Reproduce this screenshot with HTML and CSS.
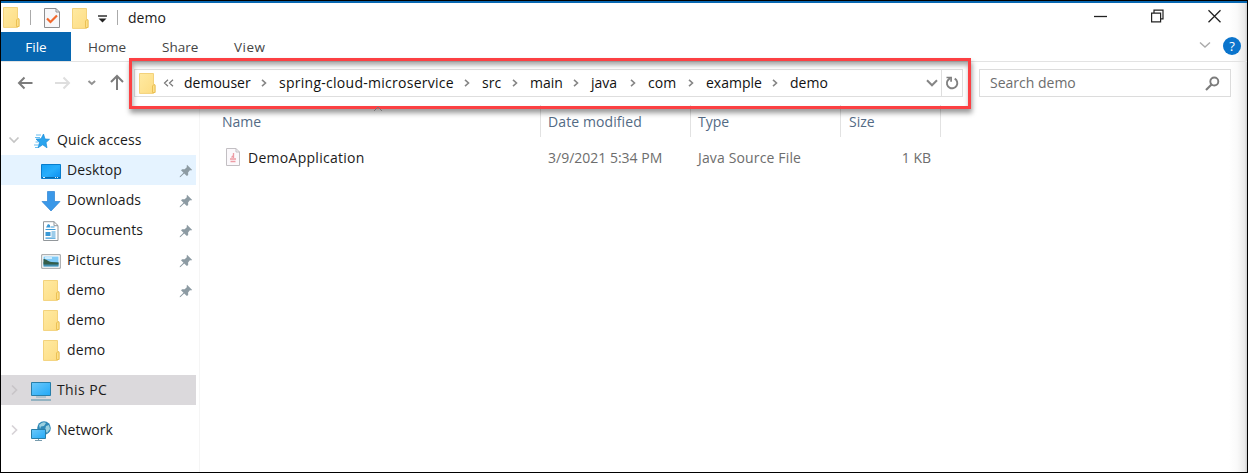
FILE: index.html
```html
<!DOCTYPE html>
<html lang="en">
<head>
<meta charset="utf-8">
<title>demo</title>
<link rel="stylesheet" href="styles.css">
</head>
<body>
<svg class="defs" width="0" height="0">
  <defs>
    <linearGradient id="fg" x1="0" y1="0" x2="1" y2="1"><stop offset="0" stop-color="#ffeaa2"/><stop offset="1" stop-color="#fddc82"/></linearGradient>
    <linearGradient id="bg" x1="0" y1="0" x2="1" y2="1"><stop offset="0" stop-color="#14a0f5"/><stop offset=".5" stop-color="#27aefc"/><stop offset="1" stop-color="#0a8df0"/></linearGradient>
    <linearGradient id="pc" x1="0" y1="0" x2="1" y2="1"><stop offset="0" stop-color="#6cc9fb"/><stop offset="1" stop-color="#22a9f7"/></linearGradient>
    <symbol id="folder" viewBox="0 0 17 21"><path d="M.5.5h14v10.800l1.500 1v7.200h-1.500v.900H.5z" fill="url(#fg)" stroke="#f3d27c"/><path d="M13.500 19.500v-6.500l1-1.200h1.500v7.700z" fill="#fde08a" stroke="#e9bd4e" stroke-width=".9"/></symbol>
    <symbol id="pin" viewBox="0 0 14 14"><path d="M8 .8 13.200 6l-1.500.4-.6-.3-2 2.300.1 2.500-1.300 1.200-2.700-2.700L1.500 13 .7 13.200.9 12.300 4.500 8.700 2 6.200 3.200 5.200l2.500.1L8 3.100l-.4-.9z" fill="#8d9ba3"/></symbol>
    <symbol id="chev" viewBox="0 0 6 8"><path d="M1 .8 4.500 4 1 7.200" fill="none" stroke="#858585" stroke-width="1.600"/></symbol>
  </defs>
</svg>
<div class="window">
  <header class="titlebar">
    <svg class="folder t1"><use href="#folder"/></svg>
    <i class="sep s1"></i>
    <svg class="check" viewBox="0 0 16 20"><path d="M.5.5h11.500l3.500 3.500v15.500H.5z" fill="#f7f7f9" stroke="#8e8e90"/><path d="M12 .5V4h3.500" fill="none" stroke="#8e8e90"/><path d="m3 10.500 3.500 3.500L13 7.500" fill="none" stroke="#f2692d" stroke-width="2.200"/></svg>
    <svg class="folder t2"><use href="#folder"/></svg>
    <svg class="more" viewBox="0 0 9 8"><path d="M0 1h9" stroke="#222" stroke-width="1.400"/><path d="M.5 3.500h8L4.500 7.500z" fill="#222"/></svg>
    <i class="sep s2"></i>
    <span class="title">demo</span>
    <div class="controls">
      <svg width="13" height="14" viewBox="0 0 13 14"><path d="M0 7.500h13" stroke="#222" stroke-width="1.300"/></svg>
      <svg width="13" height="14" viewBox="0 0 13 14"><path d="M.6 4.100h9v8.800h-9zM3 4V1.100h9v8.800H9.700" fill="none" stroke="#222" stroke-width="1.200"/></svg>
      <svg width="13" height="14" viewBox="0 0 13 14"><path d="m.5 1.200 12 12m0-12-12 12" stroke="#222" stroke-width="1.300"/></svg>
    </div>
  </header>
  <nav class="ribbon">
    <span class="tab file">File</span><span class="tab home">Home</span><span class="tab share">Share</span><span class="tab view">View</span>
    <svg class="collapse" viewBox="0 0 12 8"><path d="m1 1.500 5 4.500 5-4.500" fill="none" stroke="#aaa" stroke-width="1.400"/></svg>
    <span class="help">?</span>
  </nav>
  <div class="navbar">
    <svg class="arrows" viewBox="0 0 112 20"><g fill="none" stroke-width="2"><path d="M15.500 10H2M7.500 4.500 2 10l5.500 5.500" stroke="#7c7c7c"/><path d="M38 10h14M46.500 4.500 52 10l-5.500 5.500" stroke="#dedede"/><path d="m71.500 8 3.300 3 3.300-3" stroke="#929292"/><path d="M100 17V3.500M94 9l6-6 6 6" stroke="#7c7c7c"/></g></svg>
    <div class="address">
      <svg class="folder"><use href="#folder"/></svg>
      <svg class="back" viewBox="0 0 11 8"><path d="M5 .8 1.500 4 5 7.200M10 .8 6.500 4 10 7.200" fill="none" stroke="#777" stroke-width="1.200"/></svg>
      <div class="crumbs">
        <div class="crumb c1"><span>demouser</span><svg><use href="#chev"/></svg></div>
        <div class="crumb c2"><span>spring-cloud-microservice</span><svg><use href="#chev"/></svg></div>
        <div class="crumb c3"><span>src</span><svg><use href="#chev"/></svg></div>
        <div class="crumb c4"><span>main</span><svg><use href="#chev"/></svg></div>
        <div class="crumb c5"><span>java</span><svg><use href="#chev"/></svg></div>
        <div class="crumb c6"><span>com</span><svg><use href="#chev"/></svg></div>
        <div class="crumb c7"><span>example</span><svg><use href="#chev"/></svg></div>
        <div class="crumb c8"><span>demo</span></div>
      </div>
      <svg class="drop" viewBox="0 0 12 8"><path d="m1 1.300 5 5 5-5" fill="none" stroke="#858585" stroke-width="2"/></svg>
      <div class="refresh"><svg width="14" height="14" viewBox="0 0 14 14"><path d="M9.700 2.600A5.200 5.200 0 1 1 2.600 4.500L5 2" fill="none" stroke="#808080" stroke-width="1.900"/><path d="M1.500 1.500h4.600v4.300" fill="none" stroke="#808080" stroke-width="1.700"/></svg></div>
    </div>
    <div class="search"><span>Search demo</span><svg width="15" height="15" viewBox="0 0 15 15"><circle cx="9.300" cy="5.500" r="4" fill="none" stroke="#7c7c7c" stroke-width="1.900"/><path d="m6.500 8.500-5.500 5.500" stroke="#7c7c7c" stroke-width="2.200"/></svg></div>
    <div class="highlight"></div>
  </div>
  <div class="body">
    <aside class="sidebar">
      <div class="item root quick"><svg class="exp" viewBox="0 0 12 12"><path d="m1.500 3.500 4.500 4.500 4.500-4.500" fill="none" stroke="#c5c5c5" stroke-width="1.700"/></svg>
        <svg class="ico" viewBox="0 0 20 20"><path d="m12.500 3 1.500 5 4.500.3-3.500 3.200 1 5.300-4.300-3-4.700 3 1.500-5.300-3.500-3.400 5-.3z" fill="#2aa4ee" stroke="#188bd8" stroke-width=".7"/><path d="M5 4h5M4 6.500h5M4.500 11h3M3 14h5M4 16.500h3" stroke="#66bdf0"/></svg><span>Quick access</span></div>
      <div class="item child hover"><svg class="ico" viewBox="0 0 20 20"><path d="M.5 3.500h19v14H.5z" fill="url(#bg)" stroke="#087dcc"/><path d="M1 16.500h18" stroke="#096bad"/><path d="M2 16.500h2m10 0h1m1 0h1" stroke="#d3edff"/></svg><span class="l1">Desktop</span><svg class="pin"><use href="#pin"/></svg></div>
      <div class="item child"><svg class="ico" viewBox="0 0 20 20"><path d="M6.500.5h7v10H19L10 20 1 10.500h5.500z" fill="#3a98e8" stroke="#2b83d2" stroke-width=".7"/></svg><span class="l2">Downloads</span><svg class="pin"><use href="#pin"/></svg></div>
      <div class="item child"><svg class="ico" viewBox="0 0 20 20"><path d="M2.500.7H13L17 4.500v15H2.500z" fill="#fff" stroke="#92979b"/><path d="M13 .7v4h4" fill="none" stroke="#92979b"/><path d="M5 6.500 7 3l2 1v2.500zM4.500 11h5v4h-5z" fill="#3a99d6"/><path d="M9.500 6h4M4.500 8.500h10M10.500 11h4m-4 2h4m-4 2h4m-10 2.200h10" stroke="#3a99d6" stroke-width="1.200"/></svg><span class="l3">Documents</span><svg class="pin"><use href="#pin"/></svg></div>
      <div class="item child"><svg class="ico" viewBox="0 0 20 20"><path d="M.7 3.700h18.600v13.600H.7z" fill="#fff" stroke="#9b9ea0"/><path d="M2.500 5.500h15v10h-15z" fill="#80caf6"/><path d="M2.500 11h15v4.500h-15z" fill="#438eb0"/><path d="M2.500 8c3 0 4 2.500 8 3l7 .7v1.800H2.500z" fill="#345d49"/><path d="M4 7h7" stroke="#e3f6ff" stroke-width="1.500"/></svg><span class="l4">Pictures</span><svg class="pin"><use href="#pin"/></svg></div>
      <div class="item child"><svg class="folder"><use href="#folder"/></svg><span>demo</span><svg class="pin"><use href="#pin"/></svg></div>
      <div class="item child"><svg class="folder"><use href="#folder"/></svg><span>demo</span></div>
      <div class="item child"><svg class="folder"><use href="#folder"/></svg><span>demo</span></div>
      <div class="item root selected"><svg class="exp" viewBox="0 0 12 12"><path d="m4 1.500 4.500 4.500L4 10.500" fill="none" stroke="#c8c5c8" stroke-width="1.700"/></svg>
        <svg class="ico" viewBox="0 0 20 20"><path d="M.5 1.500h19v13H.5z" fill="url(#pc)" stroke="#287ea9"/><path d="M5 16h10" stroke="#8aaec0"/><path d="M0 19h20" stroke="#7ba5b9" stroke-width="1.500"/></svg><span class="pcname">This PC</span></div>
      <div class="item root"><svg class="exp" viewBox="0 0 12 12"><path d="m4 1.500 4.500 4.500L4 10.500" fill="none" stroke="#d7d3d7" stroke-width="1.700"/></svg>
        <svg class="ico" viewBox="0 0 20 20"><circle cx="13" cy="7" r="6.800" fill="#2e88b7"/><path d="M8 4q4-4 7-2l-2 3-3 .5-1 2.500zM15 5l3-1 1 4-3 4-2-3z" fill="#9bd0df"/><path d="M.5 8.500h14v9H.5z" fill="url(#pc)" stroke="#287ea9"/><path d="M7.500 18v1.500M4 19.500h7" stroke="#789cae"/></svg><span class="net">Network</span></div>
    </aside>
    <main class="files">
      <div class="row head"><div class="name"><span>Name</span></div><div class="date"><span>Date modified</span></div><div class="type"><span>Type</span></div><div class="size"><span>Size</span></div>
        <svg class="sort" viewBox="0 0 10 6"><path d="m1 5 4-4 4 4" fill="none" stroke="#777"/></svg></div>
      <div class="row file-row"><div class="name"><svg width="14" height="18" viewBox="0 0 14 18"><path d="M.5.5h9.500l3.500 3.500v13.500H.5z" fill="#fbf8fb" stroke="#c2bfc3"/><path d="M10 .5V4h3.500" fill="none" stroke="#c2bfc3"/><path d="M7.500 5v5M5.500 9.500l2-2M4 11h6M4.500 13.500h5" stroke="#ee9ba4" stroke-width="1.300"/></svg><span>DemoApplication</span></div><div class="date"><span>3/9/2021 5:34 PM</span></div><div class="type"><span>Java Source File</span></div><div class="size"><span>1 KB</span></div></div>
    </main>
  </div>
</div>
</body>
</html>
```
FILE: styles.css
```css
* { box-sizing: border-box; }
body { margin: 0; overflow: hidden; font: 14px/20px "Open Sans", "Noto Sans", sans-serif; color: #1b1b1b; }
svg { display: block; flex: none; }
.defs { position: absolute; }
span { white-space: nowrap; }
.window { width: 1248px; height: 473px; border: 1px solid #000; background: linear-gradient(90deg, #fff 1228px, #fafafa 1236px, #e9e9e9 1244px, #c9c9c9 1246px); display: flex; flex-direction: column; }
.titlebar { height: 31px; flex: none; border-top: 2px solid #0767b1; display: flex; align-items: center; padding: 0 26px 0 2px; }
.folder { width: 17px; height: 21px; }
.t1 { margin-top: -1px; }
.sep { width: 1px; height: 15px; background: #aaa; }
.s1 { margin: 0 13px 0 10px; }
.check { width: 16px; height: 20px; margin-right: 12px; margin-top: 1px; }
.t2 { margin-top: 1px; }
.more { width: 9px; height: 8px; margin: 3px 10px 0 9px; }
.s2 { margin-right: 10px; }
.controls { margin-left: auto; display: flex; gap: 44px; margin-top: -4px; }
.ribbon { height: 30px; flex: none; display: flex; align-items: center; border-bottom: 1px solid #e3e3e3; padding-right: 6px; font-size: 13.500px; color: #444; }
.tab { height: 29px; line-height: 30px; }
.file { width: 70px; text-align: center; color: #fff; background: #0767b1; }
.home { margin-left: 17px; width: 74px; }
.share { width: 72px; }
.collapse { width: 12px; height: 8px; margin: -3px 12px 0 auto; }
.help { width: 18px; height: 18px; margin-top: -2px; border-radius: 50%; background: #0b74cc; color: #fff; font-size: 13px; line-height: 18px; text-align: center; }
.view { letter-spacing: .5px; }
.navbar { position: relative; height: 43px; flex: none; display: flex; align-items: flex-start; padding-top: 7px; padding-left: 16px; }
.arrows { width: 112px; height: 20px; margin: 4px 5px 0 0; }
.address { width: 829px; height: 28px; border: 1px solid #dedede; display: flex; align-items: center; padding-left: 4px; background: #fff; color: #111; }
.address .folder { margin-right: 7px; }
.back { width: 11px; height: 8px; margin-right: 10px; }
.crumbs { display: flex; width: 742px; }
.crumb { display: flex; align-items: center; justify-content: space-between; padding-right: 12px; }
.crumb svg { width: 6px; height: 8px; }
.c1 { width: 95px; } .c2 { width: 203px; } .c3 { width: 48px; } .c4 { width: 61px; }
.c5 { width: 57px; } .c6 { width: 58px; } .c7 { width: 84px; } .c8 { width: 60px; }
.c2 span { letter-spacing: .27px; }
.drop { width: 12px; height: 8px; }
.refresh { width: 21px; height: 26px; margin-left: auto; border-left: 1px solid #dedede; display: grid; place-items: center; }
.search { width: 252px; height: 28px; margin-left: 16px; border: 1px solid #dcdcdc; padding: 0 10px; display: flex; align-items: center; justify-content: space-between; color: #6d6d6d; background: #fff; }
.highlight { position: absolute; left: 128px; top: -4px; width: 842px; height: 51px; border: 3px solid #fc4043; box-shadow: 1px 4px 5px rgba(0,0,0,.4), inset 1px 4px 5px rgba(0,0,0,.35); z-index: 2; }
.body { flex: 1; display: flex; min-height: 0; }
.sidebar { width: 199px; border-right: 1px solid #f5f5f5; padding-top: 20px; }
.item { height: 30px; width: 195px; display: flex; align-items: center; }
.item span { letter-spacing: .13px; }
.child { padding-left: 40px; }
.child .folder { margin: 1px 7px 0 2px; }
.root { padding-left: 7px; }
.exp { width: 12px; height: 12px; margin-right: 11px; }
.ico { width: 20px; height: 20px; margin-right: 6px; margin-top: 1px; }
.pin { width: 14px; height: 14px; margin-left: auto; margin-right: 3px; margin-top: 1px; }
.hover { background: #e5f3ff; }
.selected { background: #dbd9dc; margin: 10px 0; }
.item .l4 { letter-spacing: .2px; }
.item .pcname { letter-spacing: .4px; }
.item .net { letter-spacing: 0; }
.files { flex: 1; }
.row { display: flex; position: relative; align-items: center; }
.head { height: 32px; color: #536a84; }
.head > div { height: 32px; border-right: 1px solid #e2e2e2; padding-top: 7px; }
.head .date span { letter-spacing: .1px; }
.name { width: 341px; padding-left: 22px; }
.date, .type { width: 150px; padding-left: 7px; }
.size { width: 100px; padding-left: 8px; }
.sort { position: absolute; left: 173px; top: 1px; width: 10px; height: 6px; z-index: 3; }
.file-row { height: 30px; margin-top: 5px; color: #6d6d6d; }
.file-row span { display: inline-block; padding-top: 1px; }
.file-row .name { display: flex; align-items: center; gap: 8px; padding-left: 26px; color: #1b1b1b; }
.file-row .name span { letter-spacing: .28px; }
.file-row .type span { letter-spacing: .15px; }
.file-row .size { padding-right: 10px; text-align: right; }
```
